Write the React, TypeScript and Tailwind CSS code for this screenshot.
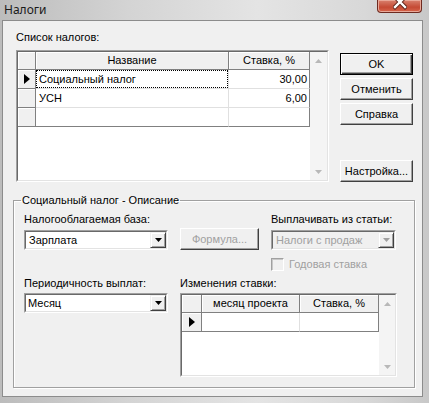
import React from "react";

const font = { fontFamily: '"Liberation Sans", Arial, sans-serif' };

function DownArrow({ color = "#000" }: { color?: string }) {
  return (
    <svg width="7" height="4" viewBox="0 0 7 4">
      <polygon points="0,0 7,0 3.5,4" fill={color} />
    </svg>
  );
}

function UpArrow({ color = "#000" }: { color?: string }) {
  return (
    <svg width="7" height="4" viewBox="0 0 7 4">
      <polygon points="0,4 7,4 3.5,0" fill={color} />
    </svg>
  );
}

function Indicator() {
  return (
    <svg width="6" height="10" viewBox="0 0 6 10">
      <polygon points="0,0 6,5 0,10" fill="#000" />
    </svg>
  );
}

function Sunken({ className, children }: { className: string; children: React.ReactNode }) {
  return (
    <div className={"border border-t-[#a0a0a0] border-l-[#a0a0a0] border-r-white border-b-white " + className}>
      <div className="h-full w-full border border-t-[#696969] border-l-[#696969] border-r-[#e3e3e3] border-b-[#e3e3e3]">
        {children}
      </div>
    </div>
  );
}

function ComboBtn({ disabled }: { disabled?: boolean }) {
  return (
    <div className="w-[16px] h-full shrink-0 flex items-center justify-center bg-[#f0f0f0] border border-t-[#f0f0f0] border-l-[#f0f0f0] border-r-[#404040] border-b-[#404040] shadow-[inset_1px_1px_0_#fff,inset_-1px_-1px_0_#a0a0a0]">
      <DownArrow color={disabled ? "#a0a0a0" : "#000"} />
    </div>
  );
}

function Scrollbar({ w }: { w: string }) {
  return (
    <div className={w + " h-full shrink-0 bg-[#f4f4f4] flex flex-col justify-between"}>
      <div className="h-[17px] flex items-center justify-center">
        <UpArrow color="#b8b8b8" />
      </div>
      <div className="h-[17px] flex items-center justify-center">
        <DownArrow color="#b8b8b8" />
      </div>
    </div>
  );
}

const head = "h-[18px] shrink-0 flex items-center justify-center bg-[#f0f0f0] border-r border-b border-[#808080] shadow-[inset_1px_1px_0_#fff]";
const ind = "h-[19px] shrink-0 flex items-center justify-center bg-[#f0f0f0] border-r border-b border-[#808080] shadow-[inset_1px_1px_0_#fff]";

function Btn({ children, def, disabled }: { children: React.ReactNode; def?: boolean; disabled?: boolean }) {
  if (def) {
    return (
      <div className="h-[22px] w-full flex items-center justify-center bg-[#f0f0f0] border border-black shadow-[inset_1px_1px_0_#fff,inset_-1px_-1px_0_#404040,inset_-2px_-2px_0_#a0a0a0]">
        {children}
      </div>
    );
  }
  return (
    <div
      className={
        "h-[22px] w-full flex items-center justify-center bg-[#f0f0f0] border border-t-white border-l-white border-r-[#404040] border-b-[#404040] shadow-[inset_-1px_-1px_0_#a0a0a0] " +
        (disabled ? "text-[#a0a0a0]" : "text-black")
      }
    >
      {children}
    </div>
  );
}

export default function App() {
  return (
    <div
      className="w-[429px] h-[403px] overflow-hidden flex flex-col text-[11px] text-black bg-[linear-gradient(90deg,#bcbcbc,#d4d4d4_30%,#e4e4e4_60%,#d8d8d8_85%,#c8c8c8)]"
      style={font}
    >
      {/* title bar */}
      <div className="h-[20px] shrink-0 flex items-start">
        <span className="pl-[4px] pt-[2px] text-[12px] leading-[16px] text-[#1a1a1a]" style={{ fontFamily: '"Noto Sans", "Liberation Sans", sans-serif' }}>
          Налоги
        </span>
        <div className="ml-auto mr-[7px] w-[45px] h-[13px] rounded-b-[4px] border border-t-0 border-[#6e2a20] bg-[linear-gradient(180deg,#d9826f,#c54a34_60%,#d7664c)] shadow-[inset_0_0_0_1px_#e9a898] flex justify-center overflow-hidden">
          <svg width="14" height="13" viewBox="0 0 14 13">
            <path d="M2,-3 L12,7 M12,-3 L2,7" stroke="#5a2016" strokeWidth="4.2" strokeLinecap="square" />
            <path d="M2,-3 L12,7 M12,-3 L2,7" stroke="#fff" strokeWidth="2.4" strokeLinecap="square" />
          </svg>
        </div>
      </div>

      {/* client */}
      <div className="ml-[2px] w-[421px] h-[377px] shrink-0 border border-[#8c8c8c] bg-[#f0f0f0] flex flex-col">
        {/* top section */}
        <div className="flex pl-[13px] pt-[9px]">
          <div className="w-[313px] flex flex-col">
            <div className="h-[14px] leading-[14px]">Список налогов:</div>
            <Sunken className="mt-[6px] w-[313px] h-[132px]">
              <div className="flex h-full bg-white">
                <div className="flex flex-col">
                  <div className="flex">
                    <div className={head + " w-[18px]"} />
                    <div className={head + " w-[193px]"}>Название</div>
                    <div className={head + " w-[81px]"}>Ставка, %</div>
                  </div>
                  <div className="flex">
                    <div className={ind + " w-[18px]"}>
                      <Indicator />
                    </div>
                    <div className="h-[19px] w-[193px] shrink-0 flex bg-white border-r border-b border-[#e0e0e0]">
                      <div className="flex-1 flex items-center pl-[2px] border border-dotted border-black">Социальный налог</div>
                    </div>
                    <div className="h-[19px] w-[81px] shrink-0 flex items-center justify-end pr-[2px] bg-white border-b border-b-[#e0e0e0] border-r border-r-[#808080]">
                      30,00
                    </div>
                  </div>
                  <div className="flex">
                    <div className={ind + " w-[18px]"} />
                    <div className="h-[19px] w-[193px] shrink-0 flex items-center pl-[3px] bg-white border-r border-b border-[#e0e0e0]">УСН</div>
                    <div className="h-[19px] w-[81px] shrink-0 flex items-center justify-end pr-[2px] bg-white border-b border-b-[#e0e0e0] border-r border-r-[#808080]">
                      6,00
                    </div>
                  </div>
                  <div className="flex">
                    <div className={ind + " w-[18px]"} />
                    <div className="h-[19px] w-[193px] shrink-0 bg-white border-r border-r-[#e0e0e0] border-b border-b-[#808080]" />
                    <div className="h-[19px] w-[81px] shrink-0 bg-white border-b border-r border-[#808080]" />
                  </div>
                </div>
                <Scrollbar w="w-[17px]" />
              </div>
            </Sunken>
          </div>
          <div className="ml-[11px] w-[73px] h-[152px] pt-[23px] flex flex-col">
            <Btn def>OK</Btn>
            <div className="mt-[3px]">
              <Btn>Отменить</Btn>
            </div>
            <div className="mt-[3px]">
              <Btn>Справка</Btn>
            </div>
            <div className="mt-auto">
              <Btn>Настройка...</Btn>
            </div>
          </div>
        </div>

        {/* group box */}
        <fieldset className="mt-[11px] ml-[10px] w-[402px] h-[195px] border border-[#a0a0a0] shadow-[1px_1px_0_#fff,inset_1px_1px_0_#fff] p-0 m-0 min-w-0">
          <legend className="ml-[7px] px-[1px] h-[14px] leading-[14px]">Социальный налог - Описание</legend>
          <div className="pl-[10px] pt-[5px] flex flex-col">
            <div className="flex">
              <div className="w-[144px] flex flex-col">
                <div className="h-[14px] leading-[14px]">Налогооблагаемая база:</div>
                <Sunken className="mt-[4px] w-[144px] h-[20px] bg-white">
                  <div className="flex h-full items-center">
                    <span className="flex-1 pl-[3px]">Зарплата</span>
                    <ComboBtn />
                  </div>
                </Sunken>
              </div>
              <div className="ml-[12px] w-[79px] pt-[16px]">
                <Btn disabled>Формула...</Btn>
              </div>
              <div className="ml-[12px] w-[125px] flex flex-col">
                <div className="h-[14px] leading-[14px]">Выплачивать из статьи:</div>
                <Sunken className="mt-[4px] w-[125px] h-[20px] bg-[#f0f0f0]">
                  <div className="flex h-full items-center">
                    <span className="flex-1 pl-[3px] text-[#a0a0a0]">Налоги с продаж</span>
                    <ComboBtn disabled />
                  </div>
                </Sunken>
                <div className="mt-[8px] flex items-center h-[13px]">
                  <div className="w-[13px] h-[13px] border border-t-[#a0a0a0] border-l-[#a0a0a0] border-r-white border-b-white bg-[#f0f0f0] shadow-[inset_1px_1px_0_#c8c8c8]" />
                  <span className="ml-[5px] text-[#a0a0a0] leading-[13px]">Годовая ставка</span>
                </div>
              </div>
            </div>
            <div className="flex mt-[5px]">
              <div className="w-[144px] flex flex-col">
                <div className="h-[14px] leading-[14px]">Периодичность выплат:</div>
                <Sunken className="mt-[3px] w-[144px] h-[20px] bg-white">
                  <div className="flex h-full items-center">
                    <span className="flex-1 pl-[2px]">Месяц</span>
                    <ComboBtn />
                  </div>
                </Sunken>
              </div>
              <div className="ml-[12px] w-[217px] flex flex-col">
                <div className="h-[14px] leading-[14px]">Изменения ставки:</div>
                <Sunken className="mt-[3px] w-[217px] h-[84px]">
                  <div className="flex h-full bg-white">
                    <div className="flex flex-col">
                      <div className="flex">
                        <div className={head + " w-[20px]"} />
                        <div className={head + " w-[98px]"}>месяц проекта</div>
                        <div className={head + " w-[79px]"}>Ставка, %</div>
                      </div>
                      <div className="flex">
                        <div className={ind + " w-[20px]"}>
                          <Indicator />
                        </div>
                        <div className="h-[19px] w-[98px] shrink-0 bg-white border-r border-r-[#e0e0e0] border-b border-b-[#808080]" />
                        <div className="h-[19px] w-[79px] shrink-0 bg-white border-r border-b border-[#808080]" />
                      </div>
                    </div>
                    <Scrollbar w="w-[16px]" />
                  </div>
                </Sunken>
              </div>
            </div>
          </div>
        </fieldset>
      </div>
    </div>
  );
}
